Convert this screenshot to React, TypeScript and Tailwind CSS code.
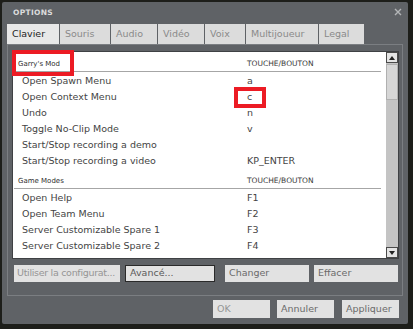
import React from 'react';

const tabs = [
  { label: 'Clavier', w: 'w-[52px]', active: true },
  { label: 'Souris', w: 'w-[50px]' },
  { label: 'Audio', w: 'w-[46px]' },
  { label: 'Vidéo', w: 'w-[46px]' },
  { label: 'Voix', w: 'w-[40px]' },
  { label: 'Multijoueur', w: 'w-[72px]' },
  { label: 'Legal', w: 'w-[45px]' },
];

type Section = { title: string; rows: [string, string][] };

const sections: Section[] = [
  {
    title: "Garry's Mod",
    rows: [
      ['Open Spawn Menu', 'a'],
      ['Open Context Menu', 'c'],
      ['Undo', 'n'],
      ['Toggle No-Clip Mode', 'v'],
      ['Start/Stop recording a demo', ''],
      ['Start/Stop recording a video', 'KP_ENTER'],
    ],
  },
  {
    title: 'Game Modes',
    rows: [
      ['Open Help', 'F1'],
      ['Open Team Menu', 'F2'],
      ['Server Customizable Spare 1', 'F3'],
      ['Server Customizable Spare 2', 'F4'],
    ],
  },
];

const Btn = ({ label, className, dim }: { label: string; className: string; dim?: boolean }) => (
  <div
    className={`flex items-center pl-[4px] bg-[#e2e2e2] text-[9.5px] whitespace-nowrap overflow-hidden ${
      dim ? 'text-[#959595]' : 'text-[#6a6a6a]'
    } ${className}`}
  >
    {label}
  </div>
);

export default function App() {
  return (
    <div
      className="w-[413px] h-[329px] bg-[#1d1e1a] pt-[2px] pl-[2px] overflow-hidden"
      style={{ fontFamily: '"DejaVu Sans", Verdana, sans-serif' }}
    >
      <div className="w-[406px] h-[322px] bg-[#5f6266] rounded-[2px] flex flex-col">
        {/* title bar */}
        <div className="h-[22px] flex items-center justify-between pl-[11px] pr-[6px]">
          <span className="text-[7.5px] font-bold text-[#dcdcdc] tracking-[0.3px]">OPTIONS</span>
          <svg width="8" height="8" viewBox="0 0 8 8" className="mt-[-2px]">
            <path d="M1 1 L7 7 M7 1 L1 7" stroke="#b4b6b8" strokeWidth="1.4" />
          </svg>
        </div>

        {/* tabs */}
        <div className="flex gap-[1px] pl-[5px] h-[20px]">
          {tabs.map(t => (
            <div
              key={t.label}
              className={`${t.w} flex items-center pl-[5px] text-[9.5px] ${
                t.active ? 'bg-[#e8e8e8] text-[#1e1e1e]' : 'bg-[#dcdcdc] text-[#8a8a8a]'
              }`}
            >
              {t.label}
            </div>
          ))}
        </div>

        {/* panel */}
        <div className="mx-[5px] h-[252px] border border-[#7b7e82] flex flex-col">
          <div className="relative ml-[4px] mr-[3px] mt-[6px] h-[208px] bg-white border border-[#3f4144] flex">
            <div className="flex-1 flex flex-col pt-[1px]">
              {sections.map((s, si) => (
                <div key={s.title} className={si > 0 ? 'mt-[2px]' : ''}>
                  <div className="h-[19px] ml-[1px] mr-[5px] border-b border-[#a6a6a6] flex items-end pb-[2px] text-[7px] text-[#2e2e2e]">
                    <span className="pl-[4px] w-[233px]">{s.title}</span>
                    <span className="text-[7.5px] text-[#3a3a3a]">TOUCHE/BOUTON</span>
                  </div>
                  {s.rows.map(([label, key]) => (
                    <div key={label} className="h-[16px] flex items-center text-[9.5px] text-[#444] pt-[3px]">
                      <span className="pl-[9px] w-[234px]">{label}</span>
                      <span>{key}</span>
                    </div>
                  ))}
                </div>
              ))}
            </div>

            {/* scrollbar */}
            <div className="w-[12px] bg-[#c4c4c4] flex flex-col">
              <div className="h-[11px] bg-[#e4e4e4] border border-[#4a4a4a] flex items-center justify-center">
                <svg width="6" height="4" viewBox="0 0 6 4">
                  <path d="M0 4 L3 0 L6 4 Z" fill="#222" />
                </svg>
              </div>
              <div className="h-[36px] mt-[1px] bg-[#d6d6d6] border border-[#b0b0b0]" />
              <div className="flex-1" />
              <div className="h-[11px] bg-[#e4e4e4] border border-[#4a4a4a] flex items-center justify-center">
                <svg width="6" height="4" viewBox="0 0 6 4">
                  <path d="M0 0 L6 0 L3 4 Z" fill="#222" />
                </svg>
              </div>
            </div>

            {/* annotation boxes */}
            <div className="absolute left-[-1px] top-[-2px] w-[62px] h-[26px] border-[4px] border-[#ec1b24]" />
            <div className="absolute left-[221px] top-[35px] w-[32px] h-[21px] border-[4px] border-[#ec1b24]" />
          </div>

          <div className="flex mt-[6px] h-[17px] ml-[6px]">
            <Btn label="Utiliser la configurat..." className="w-[106px] tracking-[-0.3px] !pl-[3px]" dim />
            <Btn label="Avancé..." className="w-[90px] ml-[5px] border border-[#2a2a2a] !text-[#5a5a5a]" />
            <Btn label="Changer" className="w-[84px] ml-[10px]" />
            <Btn label="Effacer" className="w-[84px] ml-[5px]" />
          </div>
        </div>

        {/* bottom buttons */}
        <div className="flex h-[18px] mt-[4px] ml-[211px]">
          <Btn label="OK" className="w-[57px]" dim />
          <Btn label="Annuler" className="w-[57px] ml-[7px]" />
          <Btn label="Appliquer" className="w-[57px] ml-[8px]" />
        </div>
      </div>
    </div>
  );
}
